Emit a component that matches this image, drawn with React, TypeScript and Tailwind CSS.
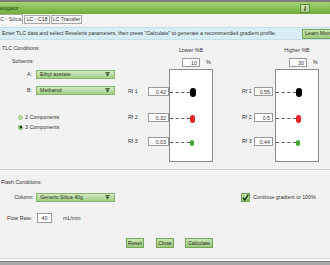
import React from 'react';

type RfColumnProps = {
  title: string;
  pct: string;
  values: string[];
  leftW: string;
  labelPad: string;
  inputW: string;
  gapRight: string;
  pctLeft: string;
};

const dots = [
  'w-[6px] h-[9px] bg-black',
  'w-[5px] h-[8px] bg-[#e32626]',
  'w-[4px] h-[6px] bg-[#3da82c]',
];
const rowGaps = ['mt-[18px]', 'mt-[17px]', 'mt-[15px]'];

function DropArrow() {
  return (
    <svg width="5" height="5" viewBox="0 0 5 5" className="shrink-0">
      <path d="M0.3 0.6h4.4" stroke="#2d4a1c" strokeWidth="0.9" />
      <path d="M0.8 1.5h3.4L2.5 4.6z" fill="#2d4a1c" />
    </svg>
  );
}

function Dropdown({ label }: { label: string }) {
  return (
    <div className="flex items-center h-[9px] w-[79px] border border-[#86b569] bg-linear-to-b from-[#d5eac4] to-[#a3cd86] pl-[3px] pr-[4px]">
      <span className="flex-1 text-[#1f2f14] whitespace-nowrap">{label}</span>
      <DropArrow />
    </div>
  );
}

function RfColumn({ title, pct, values, leftW, labelPad, inputW, gapRight, pctLeft }: RfColumnProps) {
  return (
    <div className="flex flex-col">
      <div className="flex mt-[6.5px]">
        <div className={leftW} />
        <div className="w-[44px] text-center whitespace-nowrap">{title}</div>
      </div>
      <div className="flex mt-[4.5px] items-center">
        <div className={leftW} />
        <div className={`${pctLeft} w-[18px] h-[9px] border border-[#9a9a9a] bg-white text-right pr-[2px] leading-[8px]`}>{pct}</div>
        <span className="ml-[6px]">%</span>
      </div>
      <div className="flex mt-[2px]">
        <div className={`${leftW} flex flex-col`}>
          {values.map((v, i) => (
            <div key={i} className={`${rowGaps[i]} flex items-center h-[9px]`}>
              <span className={`${labelPad} whitespace-nowrap`}>Rf {i + 1}</span>
              <div className={`ml-auto ${gapRight} ${inputW} h-[9px] border border-[#9a9a9a] bg-white text-right pr-[2px] leading-[8px]`}>{v}</div>
            </div>
          ))}
        </div>
        <div className="w-[44px] h-[93px] border border-[#8a8a8a] bg-white flex flex-col">
          {values.map((v, i) => (
            <div key={i} className={`${rowGaps[i]} flex items-center h-[9px]`}>
              <div className="w-[20px] border-t border-dashed border-[#555]" />
              <div className={`rounded-full ${dots[i]}`} />
            </div>
          ))}
        </div>
      </div>
    </div>
  );
}

function GreenButton({ children, w, className = '' }: { children: React.ReactNode; w: string; className?: string }) {
  return (
    <div className={`${w} ${className} h-[10px] flex items-center justify-center border border-[#77a65a] bg-linear-to-b from-[#c8e4b3] to-[#9dca7f] text-[#1f2f14] whitespace-nowrap`}>
      {children}
    </div>
  );
}

export default function App() {
  return (
    <div className="w-[330px] h-[265px] overflow-hidden bg-[#f2f2f2] flex flex-col text-[5.3px] leading-[7px] text-[#333] font-['Liberation_Sans',Arial,sans-serif]">
      <div className="h-[2px] bg-[#7d7d7d] shrink-0" />
      <div className="h-[12px] shrink-0 flex items-center bg-linear-to-b from-[#a4d374] to-[#70ab39]">
        <span className="ml-[-4px] text-[#203d10]">Navigator</span>
        <div className="ml-auto mr-[20px] w-[10px] h-[9px] flex items-center justify-center border border-[#5e8f3c] bg-linear-to-b from-[#d4e9c0] to-[#9fc77f] text-[#1d2d10] italic font-bold text-[7px]">
          i
        </div>
      </div>
      <div className="h-[10px] shrink-0 flex items-end bg-[#f4f4f4]">
        <div className="ml-[-8px] h-[10px] px-[1px] flex items-center bg-white border border-b-0 border-[#a8a8a8] whitespace-nowrap">TLC - Silica</div>
        <div className="ml-[1px] h-[9px] px-[1px] flex items-center bg-[#f7f7f7] border border-[#a8a8a8] whitespace-nowrap">LC - C18</div>
        <div className="ml-[1px] h-[9px] px-[1px] flex items-center bg-[#f7f7f7] border border-[#a8a8a8] whitespace-nowrap">LC Transfer</div>
      </div>
      <div className="mt-[3px] h-[13px] shrink-0 flex items-center bg-[#d9edf5] border-y border-[#c7dfe9]">
        <span className="flex-1 min-w-0 pl-[2px] whitespace-nowrap text-[#333]">
          Enter TLC data and select Reveleris parameters, then press "Calculate" to generate a recommended gradient profile.
        </span>
        <GreenButton w="w-[32px]" className="shrink-0 -mr-[4px] justify-start pl-[2px]">Learn More</GreenButton>
      </div>

      <div className="flex shrink-0">
        <div className="w-[126px] flex flex-col">
          <div className="mt-[4.5px] pl-[2px]">TLC Conditions:</div>
          <div className="mt-[6px] pl-[12px]">Solvents:</div>
          <div className="mt-[5.5px] flex items-center">
            <span className="ml-[27px] w-[9px]">A:</span>
            <Dropdown label="Ethyl acetate" />
          </div>
          <div className="mt-[7px] flex items-center">
            <span className="ml-[27px] w-[9px]">B:</span>
            <Dropdown label="Methanol" />
          </div>
          <div className="mt-[18.5px] flex items-center h-[7px]">
            <div className="ml-[18px] w-[5px] h-[5px] rounded-full bg-[#b6d99e] border border-[#a0c888]" />
            <span className="ml-[2px]">2 Components</span>
          </div>
          <div className="mt-[3px] flex items-center h-[7px]">
            <div className="ml-[18px] w-[5px] h-[5px] rounded-full bg-[#8dbd70] flex items-center justify-center">
              <div className="w-[2px] h-[2px] rounded-full bg-black" />
            </div>
            <span className="ml-[2px]">3 Components</span>
          </div>
        </div>
        <RfColumn
          title="Lower %B"
          pct="10"
          values={['0.42', '0.32', '0.03']}
          leftW="w-[43px]"
          labelPad="ml-[2px]"
          inputW="w-[21px]"
          gapRight="mr-0"
          pctLeft="ml-[13px]"
        />
        <div className="w-[28px]" />
        <RfColumn
          title="Higher %B"
          pct="30"
          values={['0.55', '0.5', '0.44']}
          leftW="w-[34px]"
          labelPad="ml-[1px]"
          inputW="w-[19px]"
          gapRight="mr-[2px]"
          pctLeft="ml-[14px]"
        />
      </div>

      <div className="mt-[7px] h-[1px] bg-[#cfcfcf] shrink-0" />
      <div className="h-[1px] bg-white shrink-0" />

      <div className="mt-[7.5px] pl-[1px]">Flash Conditions:</div>
      <div className="mt-[7.5px] flex items-center h-[9px]">
        <span className="w-[35px] text-right pr-[1px]">Column:</span>
        <div className="ml-[1px]">
          <Dropdown label="Generic Silica 40g" />
        </div>
        <div className="ml-[126px] w-[9px] h-[9px] border border-[#6f9f50] bg-linear-to-b from-[#c4e2ad] to-[#93c474] flex items-center justify-center">
          <svg width="7" height="7" viewBox="0 0 7 7">
            <path d="M1 3.8l1.8 2.2L6.3 0.6" fill="none" stroke="#17300a" strokeWidth="1.4" />
          </svg>
        </div>
        <span className="ml-[3px] whitespace-nowrap">Continue gradient to 100%</span>
      </div>
      <div className="mt-[11px] flex items-center h-[10px]">
        <span className="ml-[7px] w-[30px] whitespace-nowrap">Flow Rate:</span>
        <div className="w-[15px] h-[10px] border border-[#9a9a9a] bg-white flex items-center justify-center">40</div>
        <span className="ml-[11px]">mL/min</span>
      </div>
      <div className="mt-[15px] flex">
        <GreenButton w="w-[18px]" className="ml-[126px]">Reset</GreenButton>
        <GreenButton w="w-[18px]" className="ml-[12px]">Close</GreenButton>
        <GreenButton w="w-[28px]" className="ml-[11px]">Calculate</GreenButton>
      </div>

      <div className="mt-auto h-[1px] bg-[#d6d6d6] shrink-0" />
      <div className="h-[2px] bg-white shrink-0" />
      <div className="h-[1px] bg-[#7c7c7c] shrink-0" />
      <div className="h-[3px] bg-[#a9a9a9] shrink-0" />
    </div>
  );
}
